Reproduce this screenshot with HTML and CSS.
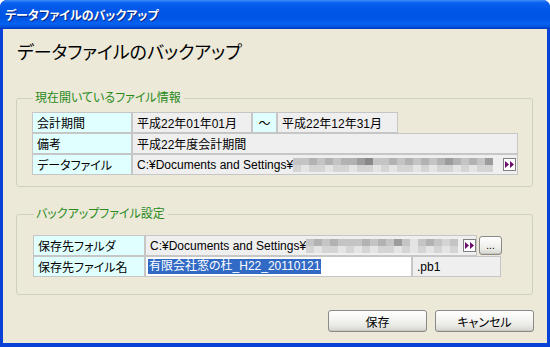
FILE: index.html
```html
<!DOCTYPE html>
<html lang="ja">
<head>
<meta charset="utf-8">
<title>データファイルのバックアップ</title>
<link rel="stylesheet" href="styles.css">
</head>
<body>
<div class="window">
  <div class="titlebar"><span class="title">データファイルのバックアップ</span></div>
  <div class="client">
    <h1 class="heading">データファイルのバックアップ</h1>

    <fieldset class="group g1">
      <legend>現在開いているファイル情報</legend>
      <div class="grid">
        <div class="row">
          <div class="cell label w100">会計期間</div>
          <div class="cell value w120">平成22年01年01月</div>
          <div class="cell label w25 tilde">～</div>
          <div class="cell value w121">平成22年12年31月</div>
        </div>
        <div class="row">
          <div class="cell label w100">備考</div>
          <div class="cell value w386">平成22年度会計期間</div>
        </div>
        <div class="row">
          <div class="cell label w100">データファイル</div>
          <div class="cell value w386 path">
            <span class="ptext">C:¥Documents and Settings¥</span>
            <span class="mosaic">
              <i class="c"></i><i class="b"></i><i class="c"></i><i class="a"></i><i class="d"></i><i class="b"></i><i class="c"></i><i class="b"></i><i class="d"></i><i class="a"></i><i class="c"></i><i class="b"></i><i class="d"></i><i class="b"></i><i class="d"></i><i class="a"></i><i class="e"></i><i class="b"></i><i class="f"></i><i class="b"></i><i class="c"></i><i class="a"></i><i class="c"></i><i class="b"></i><i class="d"></i><i class="a"></i><i class="c"></i><i class="b"></i><i class="d"></i><i class="b"></i><i class="c"></i><i class="a"></i><i class="d"></i><i class="b"></i><i class="c"></i><i class="a"></i><i class="d"></i><i class="b"></i><i class="e"></i><i class="b"></i><i class="d"></i><i class="a"></i><i class="c"></i><i class="b"></i><i class="d"></i><i class="a"></i><i class="c"></i><i class="b"></i><i class="e"></i><i class="b"></i>
            </span>
            <span class="ffbtn r1" aria-label="参照"><svg width="10" height="7" viewBox="0 0 10 7"><path d="M0 0 L4 3.5 L0 7 Z M5 0 L9 3.5 L5 7 Z" fill="#6a0f6a"/></svg></span>
          </div>
        </div>
      </div>
    </fieldset>

    <fieldset class="group g2">
      <legend>バックアップファイル設定</legend>
      <div class="grid">
        <div class="row">
          <div class="cell label w112">保存先フォルダ</div>
          <div class="cell value w332 path">
            <span class="ptext">C:¥Documents and Settings¥</span>
            <span class="mosaic">
              <i class="c"></i><i class="b"></i><i class="d"></i><i class="a"></i><i class="c"></i><i class="b"></i><i class="d"></i><i class="b"></i><i class="c"></i><i class="a"></i><i class="c"></i><i class="b"></i><i class="c"></i><i class="a"></i><i class="d"></i><i class="b"></i><i class="c"></i><i class="a"></i><i class="d"></i><i class="b"></i><i class="c"></i><i class="b"></i><i class="e"></i><i class="a"></i><i class="c"></i><i class="b"></i><i class="a"></i><i class="a"></i><i class="c"></i><i class="b"></i><i class="d"></i><i class="a"></i><i class="c"></i><i class="b"></i><i class="b"></i><i class="a"></i><i class="c"></i><i class="b"></i>
            </span>
            <span class="ffbtn" aria-label="参照"><svg width="10" height="7" viewBox="0 0 10 7"><path d="M0 0 L4 3.5 L0 7 Z M5 0 L9 3.5 L5 7 Z" fill="#6a0f6a"/></svg></span>
          </div>
          <button class="xpbtn dots">...</button>
        </div>
        <div class="row">
          <div class="cell label w112">保存先ファイル名</div>
          <div class="cell input w267"><span class="sel">有限会社窓の杜_H22_20110121</span></div>
          <div class="cell value w89">.pb1</div>
        </div>
      </div>
    </fieldset>

    <div class="actions">
      <button class="xpbtn big">保存</button>
      <button class="xpbtn big">キャンセル</button>
    </div>
  </div>
</div>
</body>
</html>
```

FILE: styles.css
```css
* { box-sizing: border-box; }
html, body { margin: 0; padding: 0; background: #ffffff; }
body {
  font-family: "Liberation Sans", "Noto Sans CJK JP", sans-serif;
  font-size: 12px;
  font-feature-settings: "palt";
  color: #000;
}
.window {
  width: 550px;
  height: 347px;
  display: flex;
  flex-direction: column;
  background: #0841d6;
  border-radius: 7px 7px 0 0;
  overflow: hidden;
}
.titlebar {
  height: 29px;
  flex: none;
  display: flex;
  align-items: center;
  padding-left: 5px;
  background: linear-gradient(to bottom, #3b8cf7 0px, #0a5ff0 3px, #0058e8 10px, #0054e3 18px, #0663f2 24px, #0050dc 27px, #0036b8 29px);
}
.title {
  color: #fff;
  font-weight: bold;
  font-size: 12px;
  text-shadow: 1px 1px 0 #0a2a8a;
}
.client {
  flex: 1;
  margin: 0 3px 4px 3px;
  background: #ece9d8;
  padding: 12px 14px 0 13px;
  display: flex;
  flex-direction: column;
}
.heading {
  margin: 0 0 0 1px;
  font-size: 18px;
  font-weight: normal;
  line-height: 24px;
  height: 24px;
}
.group {
  margin: 0;
  border: 1px solid #d0d0bf;
  border-radius: 3px;
  min-width: 0;
}
.group legend {
  color: #2a8a1c;
  padding: 0 3px 0 2px;
  margin-left: 1px;
  line-height: 16px;
  font-size: 12px;
}
.g1 { margin-top: 25px; padding: 6px 10px 11px 15px; }
.g2 { margin-top: 19px; padding: 13px 10px 17px 16px; }

.grid { display: flex; flex-direction: column; }
.row { display: flex; align-items: center; height: 21px; }
.cell {
  height: 21px;
  border: 1px solid #c6c6c6;
  display: flex;
  align-items: center;
  padding-left: 4px;
  white-space: nowrap;
  overflow: hidden;
  flex: none;
}
.label { background: #e0ffff; }
.value { background: #efefef; }
.input { background: #ffffff; padding-left: 2px; }
.tilde { justify-content: center; padding-left: 0; }
.w100 { width: 100px; }
.w120 { width: 120px; }
.w25 { width: 25px; }
.w121 { width: 121px; }
.w386 { width: 386px; }
.w112 { width: 112px; }
.w332 { width: 332px; }
.w267 { width: 267px; }
.w89 { width: 89px; }

.path { padding-right: 0; }
.ptext { flex: none; }
.mosaic {
  display: grid;
  grid-template-rows: 7px 7px;
  grid-auto-flow: column;
  grid-auto-columns: 8px;
  flex: 0 1 auto;
  min-width: 0;
  overflow: hidden;
  margin-top: 1px;
}
.mosaic i { display: block; }
.mosaic .a { background: #e4e4e4; }
.mosaic .b { background: #d4d4d4; }
.mosaic .c { background: #c4c4c4; }
.mosaic .d { background: #b2b2b2; }
.mosaic .e { background: #9c9c9c; }
.mosaic .f { background: #888888; }
.ffbtn {
  margin-left: auto;
  width: 13px;
  height: 13px;
  border: 1px solid #808080;
  background: #fff;
  display: flex;
  align-items: center;
  justify-content: center;
  flex: none;
}
.ffbtn.r1 { margin-right: 1px; }
.ffbtn svg { display: block; }

.xpbtn {
  font-family: "Liberation Sans", "Noto Sans CJK JP", sans-serif;
  font-feature-settings: "palt";
  font-size: 12px;
  color: #000;
  border: 1px solid #8a8a8a;
  border-radius: 3px;
  background: linear-gradient(to bottom, #ffffff 0%, #f6f6f4 35%, #ebebe6 70%, #d6d5cf 100%);
  box-shadow: inset 0 -1px 0 #c9c8c1;
  padding: 0;
  display: flex;
  align-items: center;
  justify-content: center;
}
.dots {
  width: 23px;
  height: 19px;
  margin-left: 2px;
  font-size: 10px;
  line-height: 1;
}
.sel {
  background: #316ac5;
  color: #fff;
  padding: 0 1px;
  line-height: 15px;
}
.actions {
  margin-top: 15px;
  margin-right: -1px;
  display: flex;
  justify-content: flex-end;
  gap: 8px;
}
.big { width: 99px; height: 22px; }
```
